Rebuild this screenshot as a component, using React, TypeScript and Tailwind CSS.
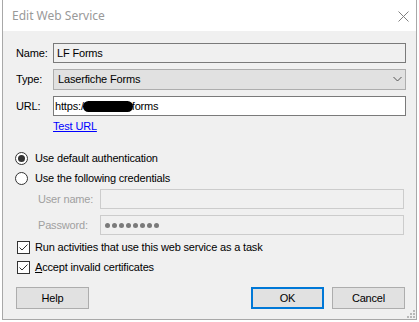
import React from "react";

function Radio({ checked }: { checked?: boolean }) {
  return (
    <span className="w-[13px] h-[13px] rounded-full border border-[#333333] bg-white flex items-center justify-center shrink-0">
      {checked && <span className="w-[7px] h-[7px] rounded-full bg-[#333333]" />}
    </span>
  );
}

function Check() {
  return (
    <span className="w-[13px] h-[13px] border border-[#333333] bg-white flex items-center justify-center shrink-0">
      <svg width="11" height="11" viewBox="0 0 11 11">
        <path d="M1.5 5.5 L4 8 L9.5 2.5" fill="none" stroke="#333333" strokeWidth="1" />
      </svg>
    </span>
  );
}

export default function App() {
  return (
    <div className="w-[419px] h-[322px] bg-white font-['Liberation_Sans',Arial,sans-serif] text-[11px] tracking-[-0.17px] text-black">
      <div className="ml-[2px] w-[415px] h-[320px] border-x border-b border-[#a8a8a8] flex flex-col">
        <div className="h-[31px] bg-white flex items-center justify-between pl-[9px] pr-[7px] shrink-0">
          <span className="font-['Noto_Sans',sans-serif] text-[12px] tracking-normal text-[#999999] leading-none mt-[1px]">
            Edit Web Service
          </span>
          <svg width="11" height="11" viewBox="0 0 11 11" className="mt-[1px]">
            <path d="M0.5 0.5 L10.5 10.5 M10.5 0.5 L0.5 10.5" stroke="#808080" strokeWidth="1" />
          </svg>
        </div>
        <div className="flex-1 bg-[#f0f0f0] pl-[13px] pr-[10px] pt-[12px] relative flex flex-col">
          <div className="flex items-center h-[20px]">
            <span className="w-[37px] shrink-0">Name:</span>
            <div className="flex-1 h-[20px] border border-[#7a7a7a] bg-[#f0f0f0] flex items-center pl-[3px]">LF Forms</div>
          </div>
          <div className="flex items-center h-[20px] mt-[6px]">
            <span className="w-[37px] shrink-0">Type:</span>
            <div className="flex-1 h-[21px] border border-[#adadad] bg-[#e1e1e1] flex items-center justify-between pl-[4px] pr-[3px]">
              <span>Laserfiche Forms</span>
              <svg width="9" height="6" viewBox="0 0 9 6">
                <path d="M0.5 1 L4.5 5 L8.5 1" fill="none" stroke="#555555" strokeWidth="1" />
              </svg>
            </div>
          </div>
          <div className="flex items-center h-[20px] mt-[7px]">
            <span className="w-[37px] shrink-0">URL:</span>
            <div className="flex-1 h-[20px] border border-[#7a7a7a] bg-white flex items-center pl-[1px]">
              <span>https:/</span>
              <span className="w-[50px] h-[11px] rounded-full bg-black mx-[-1px]" />
              <span>forms</span>
            </div>
          </div>
          <div className="ml-[37px] mt-[4px] leading-[13px]">
            <span className="text-[#0000ff] underline">Test URL</span>
          </div>
          <div className="flex items-center gap-[7px] mt-[19px] -ml-px h-[13px]">
            <Radio checked />
            <span>Use default authentication</span>
          </div>
          <div className="flex items-center gap-[7px] mt-[7px] -ml-px h-[13px]">
            <Radio />
            <span>Use the following credentials</span>
          </div>
          <div className="flex items-center h-[20px] mt-[4px] ml-[22px]">
            <span className="w-[62px] shrink-0 text-[#a0a0a0]">User name:</span>
            <div className="w-[304px] h-[20px] border border-[#cccccc] bg-[#f0f0f0]" />
          </div>
          <div className="flex items-center h-[20px] mt-[6px] ml-[22px]">
            <span className="w-[62px] shrink-0 text-[#a0a0a0]">Password:</span>
            <div className="w-[304px] h-[20px] border border-[#cccccc] bg-[#f0f0f0] flex items-center gap-[2px] pl-[4px]">
              {[0, 1, 2, 3, 4, 5, 6, 7].map((i) => (
                <span key={i} className="w-[5px] h-[5px] rounded-full bg-[#7a7a7a]" />
              ))}
            </div>
          </div>
          <div className="flex items-center gap-[5px] mt-[6px] ml-[1px] h-[13px]">
            <Check />
            <span>Run activities that use this web service as a task</span>
          </div>
          <div className="flex items-center gap-[5px] mt-[7px] ml-[1px] h-[13px]">
            <Check />
            <span>
              <span className="underline">A</span>ccept invalid certificates
            </span>
          </div>
          <div className="flex justify-between mt-[13px] mr-[1px]">
            <button className="w-[73px] h-[22px] border border-[#adadad] bg-[#e1e1e1] flex items-center justify-center">
              Help
            </button>
            <div className="flex gap-[8px]">
              <button className="w-[73px] h-[22px] border-2 border-[#0078d7] bg-[#e1e1e1] flex items-center justify-center">
                OK
              </button>
              <button className="w-[73px] h-[22px] border border-[#adadad] bg-[#e1e1e1] flex items-center justify-center">
                Cancel
              </button>
            </div>
          </div>
          <svg width="8" height="8" viewBox="0 0 8 8" className="absolute right-[1px] bottom-[1px]">
            <rect x="6" y="0" width="2" height="2" fill="#b8b8b8" />
            <rect x="3" y="3" width="2" height="2" fill="#b8b8b8" />
            <rect x="6" y="3" width="2" height="2" fill="#b8b8b8" />
            <rect x="0" y="6" width="2" height="2" fill="#b8b8b8" />
            <rect x="3" y="6" width="2" height="2" fill="#b8b8b8" />
            <rect x="6" y="6" width="2" height="2" fill="#b8b8b8" />
          </svg>
        </div>
      </div>
    </div>
  );
}
